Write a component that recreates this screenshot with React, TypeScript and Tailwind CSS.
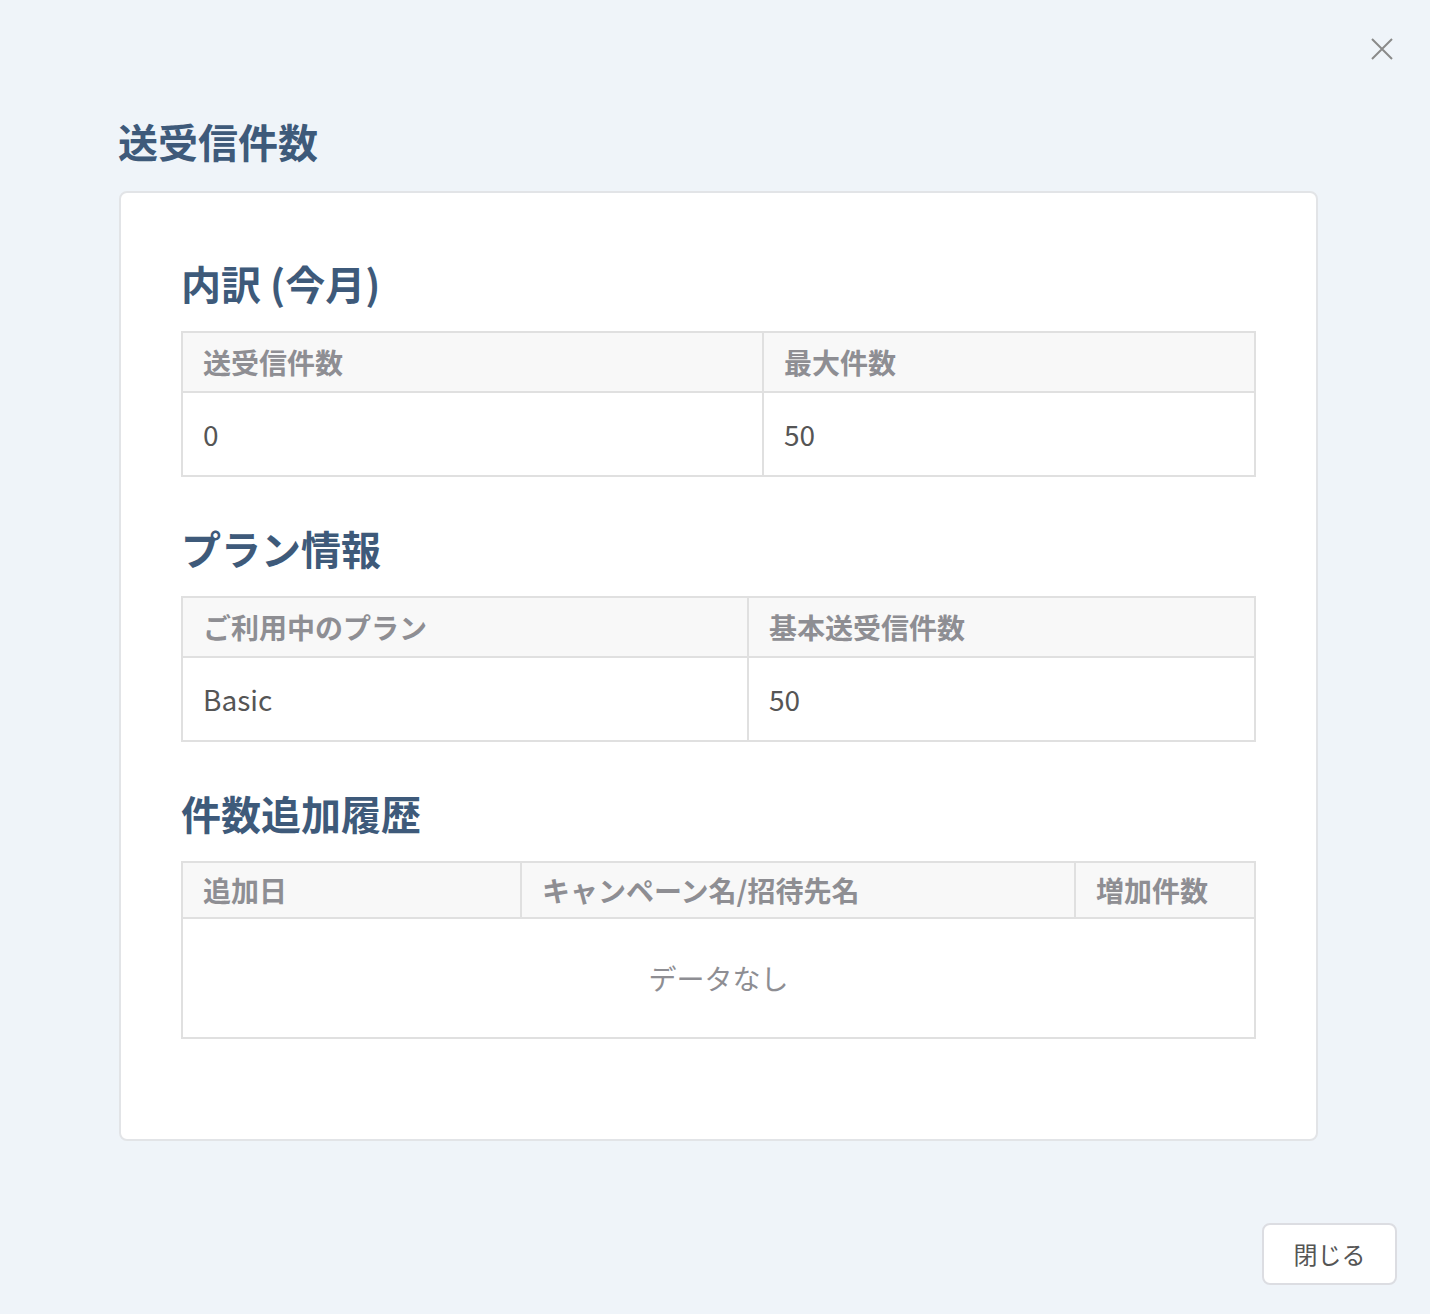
import React from 'react';

const font = { fontFamily: '"Noto Sans CJK JP", "Noto Sans", sans-serif' };

type Col = { label: string; width?: string };

const SectionTitle = ({ children }: { children: React.ReactNode }) => (
  <h3 className="text-[40px] leading-[48px] font-bold text-[#3e5a7a] mb-6">{children}</h3>
);

const DataTable = ({
  cols,
  values,
  headH,
  bodyH,
}: {
  cols: Col[];
  values: string[];
  headH: string;
  bodyH: string;
}) => (
  <div className="border-2 border-[#e0e0e0]">
    <div className={`flex bg-[#f8f8f8] border-b-2 border-[#e0e0e0] ${headH}`}>
      {cols.map((c, i) => (
        <div
          key={i}
          className={`flex items-center pl-5 text-[28px] font-bold text-[#8e8e93] ${c.width ?? 'flex-1'} ${
            i < cols.length - 1 ? 'border-r-2 border-[#e0e0e0]' : ''
          }`}
        >
          {c.label}
        </div>
      ))}
    </div>
    <div className={`flex ${bodyH}`}>
      {values.map((v, i) => (
        <div
          key={i}
          className={`flex items-center pl-5 text-[28px] text-[#555] ${cols[i].width ?? 'flex-1'} ${
            i < values.length - 1 ? 'border-r-2 border-[#e0e0e0]' : ''
          }`}
        >
          {v}
        </div>
      ))}
    </div>
  </div>
);

export default function App() {
  return (
    <div className="relative min-h-[1314px] bg-[#eff4f9] pt-[117px]" style={font}>
      <button className="absolute right-[37px] top-[38px] p-0 text-[#8a8a8a]" aria-label="close">
        <svg width="22" height="22" viewBox="0 0 22 22" fill="none" stroke="currentColor" strokeWidth="2">
          <path d="M1 1L21 21M21 1L1 21" />
        </svg>
      </button>

      <div className="pl-[118px]">
        <h2 className="text-[40px] leading-[48px] font-bold text-[#3e5a7a] mb-[26px]">送受信件数</h2>

        <div className="w-[1199px] ml-px bg-white border-2 border-[#e2e4e7] rounded-lg px-[60px] pt-[66px] pb-[100px]">
          <SectionTitle>内訳 (今月)</SectionTitle>
          <DataTable
            cols={[{ label: '送受信件数', width: 'w-[581px]' }, { label: '最大件数' }]}
            values={['0', '50']}
            headH="h-[60px]"
            bodyH="h-[82px]"
          />

          <div className="h-[47px]" />
          <SectionTitle>プラン情報</SectionTitle>
          <DataTable
            cols={[{ label: 'ご利用中のプラン', width: 'w-[566px]' }, { label: '基本送受信件数' }]}
            values={['Basic', '50']}
            headH="h-[60px]"
            bodyH="h-[82px]"
          />

          <div className="h-[47px]" />
          <SectionTitle>件数追加履歴</SectionTitle>
          <div className="border-2 border-[#e0e0e0]">
            <div className="flex h-[56px] bg-[#f8f8f8] border-b-2 border-[#e0e0e0] text-[28px] font-bold text-[#8e8e93]">
              <div className="w-[339px] flex items-center pl-5 border-r-2 border-[#e0e0e0]">追加日</div>
              <div className="w-[554px] flex items-center pl-5 border-r-2 border-[#e0e0e0]">キャンペーン名/招待先名</div>
              <div className="flex-1 flex items-center pl-5">増加件数</div>
            </div>
            <div className="h-[118px] flex items-center justify-center text-[28px] text-[#8e8e93]">データなし</div>
          </div>
        </div>
      </div>

      <div className="flex justify-end pr-[33px] mt-[82px]">
        <button className="w-[135px] h-[62px] bg-white border-2 border-[#dcdde2] rounded-lg text-[24px] text-[#555]">
          閉じる
        </button>
      </div>
    </div>
  );
}
